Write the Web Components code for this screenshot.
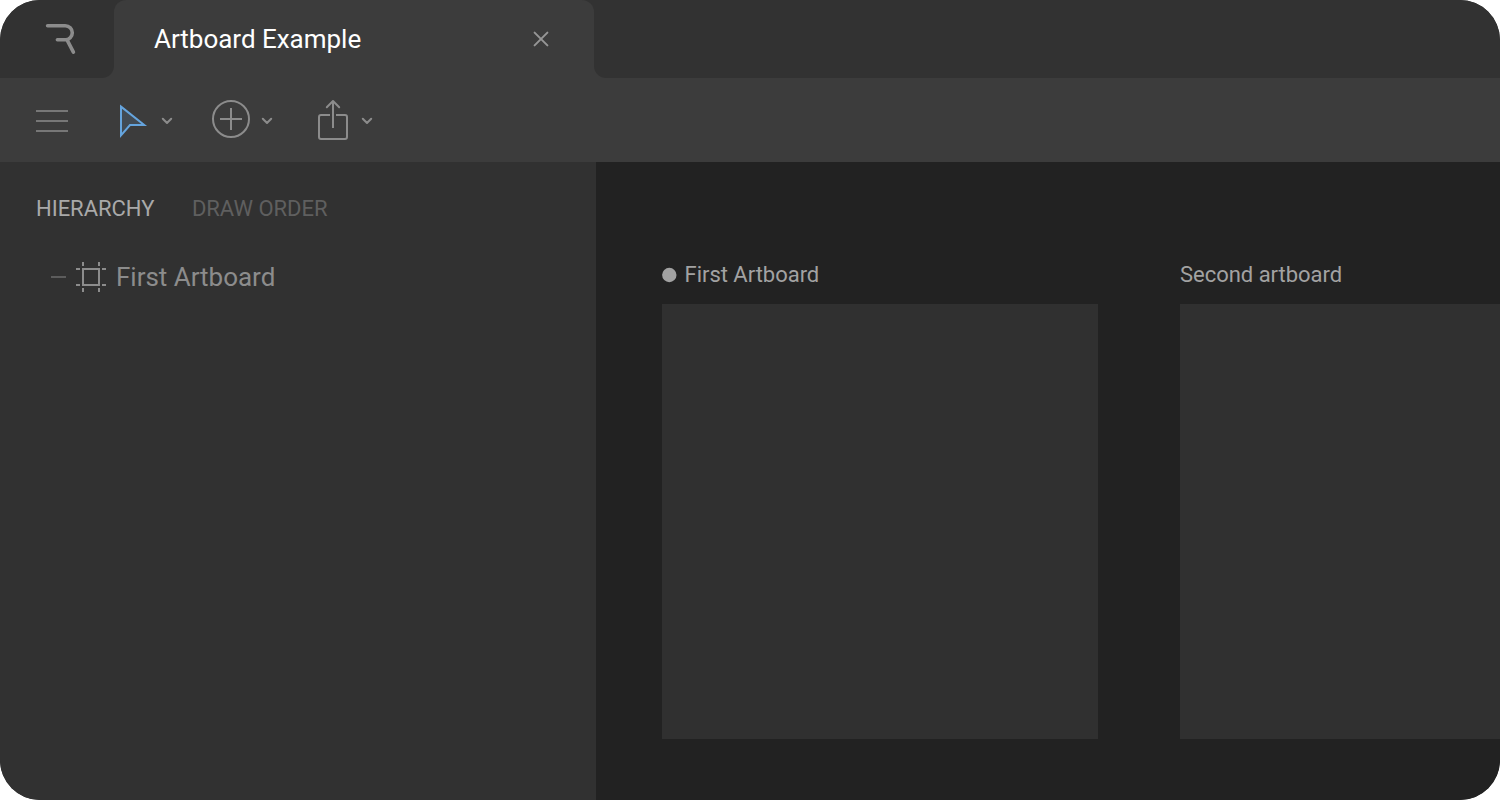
<!DOCTYPE html>
<html lang="en">
<head>
<meta charset="utf-8">
<title>Artboard Example</title>
<style>
html,body{margin:0;background:#fff;width:1500px;height:800px;overflow:hidden}
body{font-family:Roboto,sans-serif}
</style>
</head>
<body>
<editor-app></editor-app>
<script>
const define = (name, html) => customElements.define(name, class extends HTMLElement {
  constructor() {
    super();
    this.attachShadow({ mode: 'open' }).innerHTML = html;
  }
});

define('rive-logo', `<style>:host{display:block;width:114px;height:78px}svg{display:block}</style>
<svg width="114" height="78" fill="none" stroke="#8c8c8c" stroke-width="3.6" stroke-linecap="round" stroke-linejoin="round">
<path d="M47.6 25.7H65.3a7 7 0 0 1 0 14H57.4M67.3 40.4L73.4 52.2"/></svg>`);

define('file-tab', `<style>
:host{display:flex;position:relative;box-sizing:border-box;width:480px;height:78px;padding:0 45px 0 40px;align-items:center;justify-content:space-between;background:#3c3c3c;border-radius:12px 12px 0 0;color:#fff;font-size:26px;line-height:30px;letter-spacing:-.02px}
:host::before,:host::after{content:"";position:absolute;bottom:0;width:12px;height:12px}
:host::before{left:-12px;background:radial-gradient(circle at 0 0,#323232 11.5px,#3c3c3c 12.5px)}
:host::after{right:-12px;background:radial-gradient(circle at 100% 0,#323232 11.5px,#3c3c3c 12.5px)}
svg{display:block}
</style><span><slot></slot></span>
<svg width="16" height="16" fill="none" stroke="#969696" stroke-width="2" stroke-linecap="round"><path d="M1.6 1.6l12.8 12.8M14.4 1.6L1.6 14.4"/></svg>`);

define('tab-bar', `<style>:host{display:flex;height:78px;background:#323232}</style>
<rive-logo></rive-logo><file-tab>Artboard Example</file-tab>`);

define('drop-chevron', `<style>:host{display:block;width:12px;height:8px}svg{display:block}</style>
<svg width="12" height="8" fill="none" stroke="#8c8c8c" stroke-width="2" stroke-linecap="round" stroke-linejoin="round"><path d="M1.8 1.8L6 6l4.2-4.2"/></svg>`);

define('tool-bar', `<style>
:host{display:flex;height:84px;background:#3c3c3c;padding-left:36px;box-sizing:border-box;align-items:flex-start}
svg{display:block;fill:none;stroke:#8c8c8c;stroke-width:2}
.menu{margin:32px 50px 0 0;stroke:#777}
.cursor{margin:24px 13px 0 0}
.add{margin:21px 10px 0 0}
.share{margin:20px 12px 0 0}
drop-chevron{margin-top:39px}
.gap{margin-right:38px}.gap2{margin-right:44px}
</style>
<svg class="menu" width="32" height="22"><path d="M0 1h32M0 11h32M0 21h32"/></svg>
<svg class="cursor" width="30" height="38" style="stroke:#65a4dd;fill:#65a4dd26"><path d="M3 4.6L26.2 23H12L3 33.4z"/></svg>
<drop-chevron class="gap"></drop-chevron>
<svg class="add" width="40" height="40"><circle cx="20" cy="20" r="18"/><path d="M9 20h22M20 9v22"/></svg>
<drop-chevron class="gap2"></drop-chevron>
<svg class="share" width="32" height="44" stroke-linecap="round" stroke-linejoin="round"><path d="M13 17H4a2 2 0 0 0-2 2V39a2 2 0 0 0 2 2H28a2 2 0 0 0 2-2V19a2 2 0 0 0-2-2H19" stroke-linecap="butt"/><path d="M16 30V3" stroke-linecap="butt"/><path d="M9.8 9.2L16 3l6.2 6.2"/></svg>
<drop-chevron></drop-chevron>`);

define('tree-item', `<style>
:host{display:flex;align-items:center;height:30px;color:#8c8c8c;font-size:26px;line-height:30px;letter-spacing:-.02px}
svg{display:block;fill:none;stroke:#8c8c8c;stroke-width:2}
.dash{width:15px;height:2px;background:#5c5c5c;margin-right:10px}
span{margin-left:10px}
</style><div class="dash"></div>
<svg width="30" height="30"><path d="M7 7h16v16H7zM7 0v4M23 0v4M7 26v4M23 26v4M0 7h4M0 23h4M26 7h4M26 23h4"/></svg>
<span><slot></slot></span>`);

define('hierarchy-panel', `<style>
:host{display:block;box-sizing:border-box;width:596px;background:#313131;padding:34px 36px 0}
nav{display:flex;gap:37.5px;font-size:22px;line-height:26px;letter-spacing:-.02px;color:#5f5f5f}
.on{color:#a9a9a9}
tree-item{margin:40px 0 0 15px}
</style><nav><span class="on">HIERARCHY</span><span>DRAW ORDER</span></nav>
<tree-item>First Artboard</tree-item>`);

define('art-board', `<style>
:host{display:block;width:435.6px;flex:none}
header{display:flex;align-items:center;height:26px;font-size:22px;line-height:26px;letter-spacing:-.02px;color:#a2a2a2}
.sheet{margin-top:16px;height:435.4px;background:#303030}
svg{display:none;margin-right:7.5px}
:host([active]) svg{display:block}
</style><header><svg width="15" height="16"><circle cx="7.3" cy="8" r="7.2" fill="#a2a2a2"/></svg><span><slot></slot></span></header><div class="sheet"></div>`);

define('stage-view', `<style>
:host{display:flex;flex:1;min-width:0;overflow:hidden;background:#222;padding:100px 0 0 66px;gap:82.4px;box-sizing:border-box}
</style><art-board active>First Artboard</art-board><art-board>Second artboard</art-board>`);

define('editor-app', `<style>
:host{display:flex;flex-direction:column;width:1500px;height:800px;border-radius:40px;overflow:hidden;background:#313131}
main{display:flex;flex:1;min-height:0}
</style><tab-bar></tab-bar><tool-bar></tool-bar><main><hierarchy-panel></hierarchy-panel><stage-view></stage-view></main>`);
</script>
</body>
</html>
